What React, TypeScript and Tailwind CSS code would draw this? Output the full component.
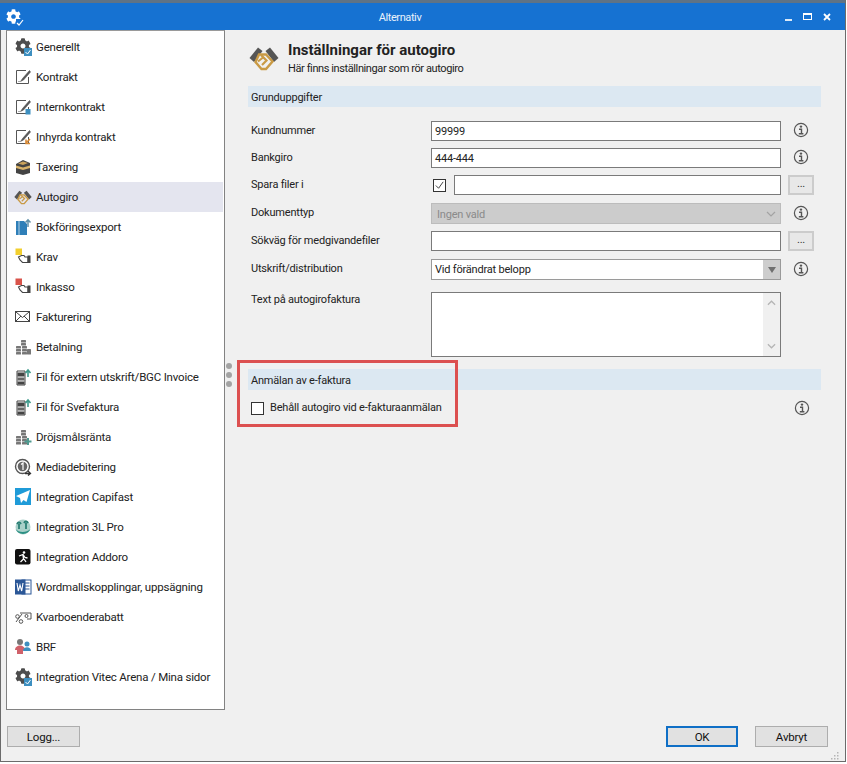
import React from "react";
import { FaCog } from "react-icons/fa";

const Svg = ({ children }: { children: React.ReactNode }) => (
  <svg viewBox="0 0 18 18" className="w-[18px] h-[18px] shrink-0" fill="none">{children}</svg>
);

const Gear = () => (
  <span className="relative block w-[18px] h-[18px] shrink-0">
    <FaCog className="w-[16px] h-[16px] text-[#4d4d4d] absolute left-[1px] top-0" />
    <svg viewBox="0 0 8 8" className="absolute right-0 bottom-0 w-[8px] h-[8px]">
      <rect width="8" height="8" fill="#3d8fc0" />
      <path d="M1.5 4l2 2 3-4" stroke="#fff" strokeWidth="1" fill="none" />
    </svg>
  </span>
);

const Pen = ({ extra }: { extra?: React.ReactNode }) => (
  <Svg>
    <path d="M12 2.5H2.500v13h12V9" stroke="#555" strokeWidth="1" />
    <path d="M15.500 2.500l-7 8-2 3 3-1.500 7-8z" fill="#555" stroke="#555" strokeWidth=".6" />
    <path d="M4.500 13.500h1" stroke="#555" />
    {extra}
  </Svg>
);

const Hand = ({ c }: { c: string }) => (
  <Svg>
    <rect x="1.500" y="0.500" width="6.500" height="6.500" fill={c} />
    <path d="M4.500 9l3-1.500h2.500l1 1.500h3v5.500H8.500L6 12z" stroke="#444" strokeWidth="1.100" fill="#fff" />
    <rect x="13.500" y="7.500" width="3" height="7.500" fill="#444" />
  </Svg>
);

const Shake = ({ big }: { big?: boolean }) => (
  <svg viewBox="0 0 30 26" className={big ? "w-[30px] h-[26px] shrink-0" : "w-[18px] h-[16px] shrink-0"} fill="none">
    <path d="M0.500 13L9 2.500l4.500 3.500-8.500 11z" fill="#555" />
    <path d="M29.500 13L21 2.500l-4.500 3.500 8.500 11z" fill="#555" />
    <path d="M10 9.500h7l6.500 7L17 24h-4.500L6.500 17z" stroke="#c99a45" strokeWidth="2.400" />
    <path d="M12 10l5.500 5.500-4.500 4.500" stroke="#c99a45" strokeWidth="2.200" />
    <path d="M9 16.500l5-4" stroke="#c99a45" strokeWidth="2" />
  </svg>
);

const Coins = ({ plus }: { plus?: boolean }) => (
  <Svg>
    <g fill="#777">
      <rect x="7" y="2" width="5" height="2.500" rx=".6" />
      <rect x="7" y="5" width="5" height="2.500" rx=".6" />
      <rect x="2" y="8" width="5" height="2.500" rx=".6" />
      <rect x="2" y="11" width="5" height="2.500" rx=".6" />
      <rect x="2" y="14" width="5" height="2.500" rx=".6" />
      <rect x="8" y="8" width="5" height="2.500" rx=".6" />
      <rect x="8" y="11" width="5" height="2.500" rx=".6" />
      <rect x="8" y="14" width="5" height="2.500" rx=".6" />
      {!plus && <rect x="13" y="11" width="4" height="5.500" rx=".6" />}
    </g>
    {plus && <path d="M14 10v7M10.500 13.500h7" stroke="#4f9a8f" strokeWidth="2" />}
  </Svg>
);

const FileUp = () => (
  <Svg>
    <path d="M3 3h8v14H3z" fill="#fff" stroke="#444" />
    <rect x="3.500" y="4.500" width="7" height="4" fill="#444" />
    <rect x="3.500" y="9.500" width="7" height="3" fill="#666" />
    <rect x="3.500" y="13.500" width="7" height="3" fill="#444" />
    <path d="M14 9V2.500M11.500 5L14 2l2.500 3" stroke="#3e9a8c" strokeWidth="1.600" />
  </Svg>
);

const icons: Record<string, React.ReactNode> = {
  Generellt: <Gear />,
  Kontrakt: <Pen />,
  Internkontrakt: <Pen extra={<rect x="11.500" y="11" width="5" height="5.500" fill="#3d8fc0" />} />,
  "Inhyrda kontrakt": <Pen extra={<path d="M16 11l-4 4m0-3.500V15.500h4" stroke="#d98a36" strokeWidth="1.600" />} />,
  Taxering: (
    <Svg>
      <path d="M2 6l7-4 7 3v10l-7 2-7-2z" fill="#444" />
      <path d="M2 7.500l7 2 7-2v2.500l-7 2-7-2z" fill="#d9b36a" />
      <path d="M4 5.500l5-2 5 1.500-5 2z" fill="#c9a25c" />
    </Svg>
  ),
  Autogiro: <Shake />,
  Bokföringsexport: (
    <Svg>
      <path d="M2 3h8l3 3v11H2z" fill="#2f7fb8" />
      <path d="M5 3v14" stroke="#d7e8f3" strokeWidth=".8" />
      <path d="M14 9V2M11.500 4.500L14 1.800l2.500 2.700" stroke="#5f8fa8" strokeWidth="1.500" />
    </Svg>
  ),
  Krav: <Hand c="#f2cf2e" />,
  Inkasso: <Hand c="#d9534a" />,
  Fakturering: (
    <Svg>
      <rect x="1.500" y="3.500" width="14" height="10" stroke="#444" fill="#fff" />
      <path d="M2 4l6.500 5.500L15 4M2 13l5-5M15 13l-5-5" stroke="#444" />
    </Svg>
  ),
  Betalning: <Coins />,
  "Fil för extern utskrift/BGC Invoice": <FileUp />,
  "Fil för Svefaktura": <FileUp />,
  Dröjsmålsränta: <Coins plus />,
  Mediadebitering: (
    <Svg>
      <circle cx="8.500" cy="8.500" r="7" stroke="#555" strokeWidth="1.400" fill="#fff" />
      <circle cx="8.500" cy="8.500" r="4.800" fill="#666" />
      <path d="M7 6.500l2-1.500v7" stroke="#fff" strokeWidth="1.200" />
      <path d="M11 15.500h5M14 13l2.500 2.500-2.500 2" stroke="#333" strokeWidth="1.300" />
    </Svg>
  ),
  "Integration Capifast": (
    <Svg>
      <rect x="1" y="0" width="16" height="17" fill="#1f9bd8" />
      <path d="M16 2L2 8l4 2 1 5 2.500-3 3 2z" fill="#fff" />
    </Svg>
  ),
  "Integration 3L Pro": (
    <Svg>
      <circle cx="9" cy="9" r="7.500" fill="#a9d0c9" />
      <path d="M1.500 11c3 4 11 4 15 0-2 6-12 7-15 0z" fill="#2b8f83" />
      <path d="M5 11V6M3 6c1-2 3-2 4 0M12 11V5M10 5c1-2 3-2 4 0" stroke="#2b7f75" strokeWidth="1.800" />
    </Svg>
  ),
  "Integration Addoro": (
    <Svg>
      <rect x="1" y="1" width="15.500" height="15.500" rx="2" fill="#111" />
      <circle cx="10" cy="4.500" r="1.300" fill="#fff" />
      <path d="M5 8l4-1.500 2 3 2.500.5M9 7l.5 4-3 3M10 11l2 3" stroke="#fff" strokeWidth="1.300" />
    </Svg>
  ),
  "Wordmallskopplingar, uppsägning": (
    <Svg>
      <rect x="8" y="2" width="9" height="14" fill="#fff" stroke="#2b5797" />
      <path d="M10.500 5h5M10.500 8h5M10.500 11h5" stroke="#2b5797" />
      <rect x="1" y="1.500" width="10.500" height="15" fill="#2b5797" />
      <path d="M3 5l1.300 8 1.700-6 1.700 6L9 5" stroke="#fff" strokeWidth="1.100" />
    </Svg>
  ),
  Kvarboenderabatt: (
    <Svg>
      <path d="M2 14L8 6" stroke="#555" />
      <circle cx="3.500" cy="8.500" r="1.800" stroke="#555" />
      <circle cx="7" cy="13.500" r="1.800" stroke="#555" />
      <path d="M6 5h11v6h-4" stroke="#555" />
      <circle cx="12.500" cy="8" r="1.500" stroke="#555" />
    </Svg>
  ),
  BRF: (
    <Svg>
      <circle cx="6" cy="4" r="3" fill="#777" />
      <path d="M1 12c0-6 10-6 10 0z" fill="#d0616a" />
      <rect x="3" y="12" width="6" height="4" fill="#d0616a" />
      <circle cx="13" cy="6" r="2.500" fill="#3d8fc0" />
      <path d="M9 13c0-5 8-5 8 0z" fill="#3d8fc0" />
    </Svg>
  ),
  "Integration Vitec Arena / Mina sidor": <Gear />,
};

const names = Object.keys(icons);

const Info = () => (
  <svg viewBox="0 0 16 16" className="w-[16px] h-[16px] -mt-[2px]" fill="none">
    <circle cx="8" cy="8" r="6.600" stroke="#555" strokeWidth="1.200" />
    <circle cx="8" cy="4.600" r="1.200" fill="#555" />
    <path d="M6 7.200h2.500v4.300M5.800 11.800h4.600" stroke="#555" strokeWidth="1.400" />
  </svg>
);

const Input = ({ value, className = "flex-1" }: { value?: string; className?: string }) => (
  <div className={`h-full bg-white border border-[#7a7a7a] px-[3px] pt-[2px] flex items-center text-[#222] ${className}`}>{value}</div>
);

const Dots = () => (
  <div className="w-[26px] h-[20px] ml-[7px] bg-[#e8e8e8] border-2 border-[#cccccc] flex items-center justify-center text-[11px] text-[#333] pb-[2px]">...</div>
);

const Row = ({ label, h, mt, info, after, top, children }: { label: string; h: string; mt: string; info?: boolean; after?: React.ReactNode; top?: boolean; children: React.ReactNode }) => (
  <div className={`flex ${h} ${mt} ${top ? "items-start" : "items-center"}`}>
    <div className="w-[183px] pl-[3px] shrink-0 text-[#222]">{label}</div>
    <div className="w-[350px] h-full flex items-center shrink-0">{children}</div>
    {after}
    {info && <div className="ml-[12px] w-[16px] flex justify-center"><Info /></div>}
  </div>
);

const Btn = ({ children, className = "" }: { children: React.ReactNode; className?: string }) => (
  <div className={`h-[21px] pt-[2px] bg-[#e1e1e1] flex items-center justify-center text-[11.5px] text-[#111] ${className}`}>{children}</div>
);

const Band = ({ children, mt }: { children: string; mt: string }) => (
  <div className={`h-[21px] ${mt} w-[573px] bg-[#dce8f2] pl-[3px] pt-[3px] flex items-center text-[#222]`}>{children}</div>
);

export default function App() {
  return (
    <div className="w-[847px] h-[764px] bg-white overflow-hidden text-[11px] tracking-[-0.2px]" style={{ fontFamily: '"Roboto", "Liberation Sans", sans-serif' }}>
      <div className="w-[846px] h-[762px] bg-[#f0f0f0] border-l border-r border-b border-[#6b6b6b] flex flex-col relative">
        <div className="h-[3px] bg-[#5f7386] -ml-px shrink-0" />
        <div className="h-[27px] bg-[#1672d2] flex items-center shrink-0 -ml-px">
          <span className="relative ml-[6px] w-[16px] h-[16px] shrink-0">
            <FaCog className="w-[15px] h-[15px] text-white" />
            <svg viewBox="0 0 8 8" className="absolute right-[-2px] bottom-[-2px] w-[8px] h-[8px]">
              <rect width="8" height="8" fill="#1672d2" />
              <path d="M1 4l2 2 4-5" stroke="#fff" strokeWidth="1.200" fill="none" />
            </svg>
          </span>
          <div className="w-[756px] shrink-0 text-center text-[11px] tracking-[-0.4px] pt-[3px] text-[#e8f1fb]">Alternativ</div>
          <div className="flex items-center gap-[11px] ml-[7px] shrink-0">
            <span className="block w-[7px] h-[2px] bg-[#dbe9f7] mt-[7px]" />
            <span className="block w-[9px] h-[7px] border border-t-2 border-white" />
            <svg viewBox="0 0 8 8" className="w-[8px] h-[8px]"><path d="M1 1l6 6M7 1L1 7" stroke="#fff" strokeWidth="1.800" /></svg>
          </div>
        </div>

        <div className="flex flex-1 min-h-0">
          <div className="w-[219px] h-[680px] ml-[5px] bg-white border border-[#828282] border-t-[#9a9a9a] p-px shrink-0 text-[11.5px]">
            {names.map((n) => (
              <div key={n} className={`h-[30px] flex items-center gap-[4px] pl-[6px] whitespace-nowrap text-[#222] ${n === "Autogiro" ? "bg-[#e4e5ef]" : ""}`}>
                {n === "Autogiro" ? <span className="w-[18px] flex justify-center"><Shake /></span> : icons[n]}
                <span className="pt-[2px]">{n}</span>
              </div>
            ))}
          </div>
          <div className="w-[23px] shrink-0 pt-[333px] pl-[1px] flex flex-col gap-[3px] items-start">
            <span className="block w-[6px] h-[6px] rounded-full bg-[#a3a3a3]" />
            <span className="block w-[6px] h-[6px] rounded-full bg-[#a3a3a3]" />
            <span className="block w-[6px] h-[6px] rounded-full bg-[#a3a3a3]" />
          </div>
          <div className="flex-1 min-w-0">
            <div className="h-[56px] flex items-start pt-[15px] pl-[1px]">
              <Shake big />
              <div className="ml-[9px] -mt-[4px]">
                <div className="text-[15px] leading-[19px] font-bold text-[#222] tracking-normal">Inställningar för autogiro</div>
                <div className="leading-[16px] pt-[1px] text-[#222] tracking-[-0.4px]">Här finns inställningar som rör autogiro</div>
              </div>
            </div>
            <Band mt="mt-0">Grunduppgifter</Band>
            <Row label="Kundnummer" h="h-[20px]" mt="mt-[14px]" info><Input value="99999" /></Row>
            <Row label="Bankgiro" h="h-[20px]" mt="mt-[7px]" info><Input value="444-444" /></Row>
            <Row label="Spara filer i" h="h-[20px]" mt="mt-[7px]" after={<Dots />}>
              <div className="w-[13px] h-[13px] ml-[2px] mr-[8px] bg-white border border-[#333] flex items-center justify-center shrink-0">
                <svg viewBox="0 0 12 12" className="w-[11px] h-[11px]"><path d="M2 6l3 3 5-7" stroke="#333" strokeWidth="1" fill="none" /></svg>
              </div>
              <Input />
            </Row>
            <Row label="Dokumenttyp" h="h-[21px]" mt="mt-[8px]" info>
              <div className="h-full flex-1 bg-[#cccccc] border border-[#bcbcbc] flex items-center pl-[5px] text-[#8a8a8a] justify-between">
                <span className="pt-[3px]">Ingen vald</span>
                <svg viewBox="0 0 10 6" className="w-[10px] h-[6px] mr-[4px]"><path d="M1 1l4 4 4-4" stroke="#a3a3a3" strokeWidth="1.200" fill="none" /></svg>
              </div>
            </Row>
            <Row label="Sökväg för medgivandefiler" h="h-[20px]" mt="mt-[7px]" after={<Dots />}><Input /></Row>
            <Row label="Utskrift/distribution" h="h-[21px]" mt="mt-[8px]" info>
              <div className="h-full flex-1 bg-white border border-[#9a9a9a] flex items-center justify-between pl-[3px] text-[#222]">
                <span className="pt-[2px]">Vid förändrat belopp</span>
                <span className="w-[17px] h-full bg-[#cdcdcd] flex items-center justify-center">
                  <svg viewBox="0 0 8 6" className="w-[8px] h-[6px]"><path d="M0 0h8L4 6z" fill="#6f6f6f" /></svg>
                </span>
              </div>
            </Row>
            <Row label="Text på autogirofaktura" h="h-[65px]" mt="mt-[12px]" top>
              <div className="h-full flex-1 bg-white border border-[#7a7a7a] flex justify-end">
                <div className="w-[17px] bg-[#f0f0f0] flex flex-col items-center justify-between py-[7px]">
                  <svg viewBox="0 0 10 6" className="w-[9px] h-[6px]"><path d="M1 5l4-4 4 4" stroke="#b5b5b5" strokeWidth="1.400" fill="none" /></svg>
                  <svg viewBox="0 0 10 6" className="w-[9px] h-[6px]"><path d="M1 1l4 4 4-4" stroke="#b5b5b5" strokeWidth="1.400" fill="none" /></svg>
                </div>
              </div>
            </Row>
            <Band mt="mt-[12px]">Anmälan av e-faktura</Band>
            <div className="h-[20px] mt-[8px] flex items-center">
              <div className="w-[13px] h-[13px] ml-[3px] bg-white border border-[#333] shrink-0" />
              <div className="ml-[6px] w-[524px] text-[#222]">Behåll autogiro vid e-fakturaanmälan</div>
              <div className="w-[16px] flex justify-center pt-[2px]"><Info /></div>
            </div>
          </div>
        </div>

        <div className="h-[52px] shrink-0 flex items-start pt-[17px] pl-[6px] pr-[17px] justify-between">
          <Btn className="w-[73px] border border-[#adadad]">Logg...</Btn>
          <div className="flex gap-[17px]">
            <Btn className="w-[72px] border-2 border-[#0f6fc6]">OK</Btn>
            <Btn className="w-[73px] border border-[#adadad]">Avbryt</Btn>
          </div>
        </div>
        <svg viewBox="0 0 8 8" className="absolute right-[6px] bottom-[1px] w-[8px] h-[8px]">
          <g fill="#b5b5b5">
            <rect x="6" y="0" width="1.500" height="1.500" /><rect x="3" y="3" width="1.500" height="1.500" /><rect x="6" y="3" width="1.500" height="1.500" />
            <rect x="0" y="6" width="1.500" height="1.500" /><rect x="3" y="6" width="1.500" height="1.500" /><rect x="6" y="6" width="1.500" height="1.500" />
          </g>
        </svg>
        <div className="absolute left-[236px] top-[360px] w-[221px] h-[67px] border-[3px] border-[#dc5050]" />
      </div>
    </div>
  );
}
